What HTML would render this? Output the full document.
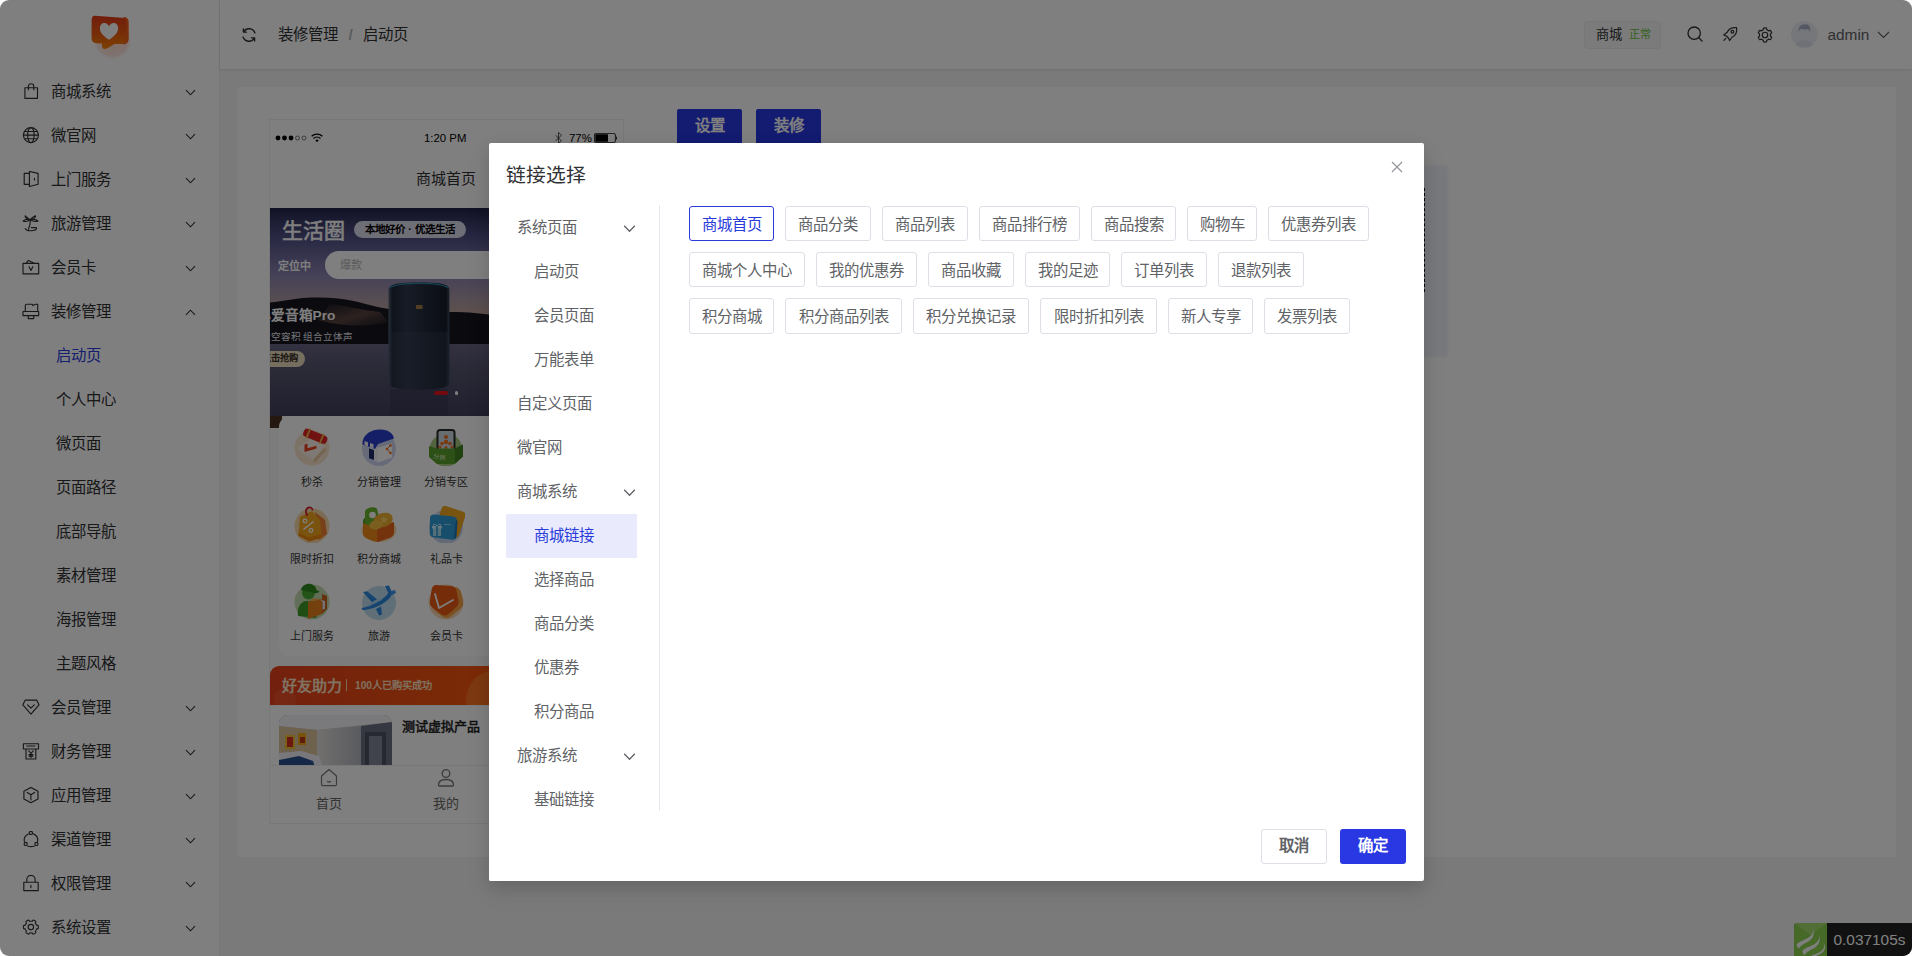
<!DOCTYPE html>
<html lang="zh-CN">
<head>
<meta charset="utf-8">
<title>链接选择</title>
<style>
*{box-sizing:border-box;margin:0;padding:0}
html,body{width:1912px;height:956px;overflow:hidden;background:#fff;font-family:"Liberation Sans",sans-serif;}
#app{position:absolute;left:0;top:0;width:1912px;height:956px;border-radius:9px;overflow:hidden;background:#f5f5f5;}
.abs{position:absolute}
svg{display:block}
/* sidebar */
#side{position:absolute;left:0;top:0;width:220px;height:956px;background:#fff;border-right:1px solid #e8ecf4;}
.mi{position:absolute;left:0;width:220px;height:44px;line-height:46px;font-size:15.4px;color:#303133;}
.mi .ic{position:absolute;left:22px;top:14px;width:18px;height:18px}
.mi .tx{position:absolute;left:51px;top:0}
.mi .ch{position:absolute;left:185px;top:18px;width:11px;height:11px}
.sub{position:absolute;left:55.5px;height:44px;line-height:46px;font-size:15.4px;color:#303133;}
.sub.on{color:#2a3bdc}
/* header */
#hd{position:absolute;left:220px;top:0;width:1692px;height:69px;background:#fff;box-shadow:0 1px 3px rgba(70,90,150,.13);}
/* card */
#card{position:absolute;left:237px;top:87px;width:1659px;height:770px;background:#fff;}
/* overlay */
#ov{position:absolute;left:0;top:0;width:1912px;height:956px;background:rgba(0,0,0,.5);}
/* modal */
#md{position:absolute;left:489px;top:143px;width:935px;height:738px;background:#fff;border-radius:2px;box-shadow:0 6px 16px rgba(0,0,0,.13),0 10px 28px 2px rgba(0,0,0,.05);}
.lm{position:absolute;left:17px;width:131px;height:44px;line-height:44px;font-size:15.4px;color:#606266;}
.lm.s{padding-left:28px}
.lm.t{padding-left:11px}
.lm.on{background:#e9ebfc;color:#2a3bdc}
.lm .ch{position:absolute;left:117px;top:15.5px;width:13px;height:13px}
.tag{position:absolute;height:35px;line-height:35px;border:1px solid #dcdfe6;border-radius:3px;font-size:15.4px;color:#606266;text-align:center;background:#fff;white-space:nowrap;}
.tag.on{border-color:#2a3bdc;color:#2a3bdc}
</style>
</head>
<body>
<div id="app">
  <div id="side"><svg class="abs" style="left:80px;top:5px;width:60px;height:60px" viewBox="0 0 60 60">
<defs><linearGradient id="lg1" x1="0" y1="0" x2="0" y2="1"><stop offset="0" stop-color="#e23a1a"/><stop offset=".55" stop-color="#ee5c10"/><stop offset="1" stop-color="#fa8206"/></linearGradient><radialGradient id="lg2"><stop offset="0" stop-color="#ffd8cc"/><stop offset=".8" stop-color="#ffe4dc"/><stop offset="1" stop-color="#ffe4dc" stop-opacity="0"/></radialGradient></defs>
<circle cx="32.600" cy="35.200" r="19" fill="url(#lg2)"/>
<path d="M43.500 11.800Q48.500 12.300 48.700 17V33.500Q48.500 39 43.500 39.500z" fill="#f2601a"/>
<path d="M15 10.700L42 12.800Q46.600 13.300 46.600 18V34Q46.600 38.800 42 39L34.500 39L27 43.600Q22 45.200 22 40.500V38.600L16 38.200Q11.600 37.700 11.600 33V15.500Q11.600 10.400 15 10.700z" fill="url(#lg1)"/>
<path d="M29 34.800C22 30 20 27 20 23.700A4.600 4.600 0 0 1 29 21.500A4.600 4.600 0 0 1 38 23.700C38 27 36 30 29 34.800z" fill="#fff"/>
</svg>
<div class="mi" style="top:69px"><svg class="ic" viewBox="0 0 18 18" fill="none" stroke="#303133" stroke-width="1.15" stroke-linejoin="round" stroke-linecap="round"><path d="M2.900 4.700H15.500V15.300H2.900z M6.400 6.800V3.400A2.700 2.700 0 0 1 11.800 3.400V6.800" /></svg><span class="tx">商城系统</span><svg class="ch" viewBox="0 0 11 11"><path d="M1 3.2 L5.5 7.8 L10 3.2" fill="none" stroke="#303133" stroke-width="1.1"/></svg></div>
<div class="mi" style="top:113px"><svg class="ic" viewBox="0 0 18 18" fill="none" stroke="#303133" stroke-width="1.15" stroke-linejoin="round" stroke-linecap="round"><circle cx="8.900" cy="8.100" r="7.500"/><ellipse cx="8.900" cy="8.100" rx="3.300" ry="7.500"/><path d="M1.400 8.100h15M2.600 4.500h12.600M2.600 11.700h12.600"/></svg><span class="tx">微官网</span><svg class="ch" viewBox="0 0 11 11"><path d="M1 3.2 L5.5 7.8 L10 3.2" fill="none" stroke="#303133" stroke-width="1.1"/></svg></div>
<div class="mi" style="top:157px"><svg class="ic" viewBox="0 0 18 18" fill="none" stroke="#303133" stroke-width="1.15" stroke-linejoin="round" stroke-linecap="round"><path d="M7.100 2.400H2.200V13.300H7.100 M7.400 0.400L16.100 2.400V13.300L7.400 15.500z M12.500 7.300v1.600"/></svg><span class="tx">上门服务</span><svg class="ch" viewBox="0 0 11 11"><path d="M1 3.2 L5.5 7.8 L10 3.2" fill="none" stroke="#303133" stroke-width="1.1"/></svg></div>
<div class="mi" style="top:201px"><svg class="ic" viewBox="0 0 18 18" fill="none" stroke="#303133" stroke-width="1.15" stroke-linejoin="round" stroke-linecap="round"><path d="M8.200 4.700C8.700 8 7.700 11 6.400 14.300 M3.300 13.600C3.300 16.600 14.600 16.600 14.600 13 M9.300 12.600H14.200 M8.200 4.700C6.500 4 4 1.500 3.200 0.800C2.800 2.500 5.500 4.500 8.200 4.700z M8.200 4.700C9.500 3.500 12 1 13.500 0.900C13.800 2.600 11 4.500 8.200 4.700z M8.200 4.700C6 4.200 2.500 4.500 1.200 6C3 7.200 6.500 6 8.200 4.700z M8.200 4.700C10.500 4.200 14.500 4.500 16 6C14 7.200 10 6 8.200 4.700z"/></svg><span class="tx">旅游管理</span><svg class="ch" viewBox="0 0 11 11"><path d="M1 3.2 L5.5 7.8 L10 3.2" fill="none" stroke="#303133" stroke-width="1.1"/></svg></div>
<div class="mi" style="top:245px"><svg class="ic" viewBox="0 0 18 18" fill="none" stroke="#303133" stroke-width="1.15" stroke-linejoin="round" stroke-linecap="round"><path d="M1 4.300H16.700V14.800H1z M4 4.300L6.300 1.400L12.300 4.300 M7.100 7.700L8.900 11.400L10.800 7.700"/></svg><span class="tx">会员卡</span><svg class="ch" viewBox="0 0 11 11"><path d="M1 3.2 L5.5 7.8 L10 3.2" fill="none" stroke="#303133" stroke-width="1.1"/></svg></div>
<div class="mi" style="top:289px"><svg class="ic" viewBox="0 0 18 18" fill="none" stroke="#303133" stroke-width="1.15" stroke-linejoin="round" stroke-linecap="round"><path d="M3.300 8.500V2.500Q3.300 1.200 4.600 1.200H10L11 2.600L13.500 1.200H15.700V8.500 M1 8.500H16.700V12.600H1z M6.300 12.600V15.600H11.700V12.600"/></svg><span class="tx">装修管理</span><svg class="ch" viewBox="0 0 11 11"><path d="M1 7.8 L5.5 3.2 L10 7.8" fill="none" stroke="#303133" stroke-width="1.1"/></svg></div>
<div class="sub on" style="top:333px">启动页</div>
<div class="sub" style="top:377px">个人中心</div>
<div class="sub" style="top:421px">微页面</div>
<div class="sub" style="top:465px">页面路径</div>
<div class="sub" style="top:509px">底部导航</div>
<div class="sub" style="top:553px">素材管理</div>
<div class="sub" style="top:597px">海报管理</div>
<div class="sub" style="top:641px">主题风格</div>
<div class="mi" style="top:685px"><svg class="ic" viewBox="0 0 18 18" fill="none" stroke="#303133" stroke-width="1.15" stroke-linejoin="round" stroke-linecap="round"><path d="M3.300 1.100H14.600L17 5.800L8.900 15.200L0.900 5.800z M5.600 5.800L8.900 9.200L12.300 5.800"/></svg><span class="tx">会员管理</span><svg class="ch" viewBox="0 0 11 11"><path d="M1 3.2 L5.5 7.8 L10 3.2" fill="none" stroke="#303133" stroke-width="1.1"/></svg></div>
<div class="mi" style="top:729px"><svg class="ic" viewBox="0 0 18 18" fill="none" stroke="#303133" stroke-width="1.15" stroke-linejoin="round" stroke-linecap="round"><path d="M1.400 0.700H16.500V6H1.400z M4.800 3H13 M4 6V16H13.800V6 M6.800 7.800L9 10.300L11.200 7.800 M9 10.300V14.500 M7 11.600H11 M7 13.100H11"/></svg><span class="tx">财务管理</span><svg class="ch" viewBox="0 0 11 11"><path d="M1 3.2 L5.5 7.8 L10 3.2" fill="none" stroke="#303133" stroke-width="1.1"/></svg></div>
<div class="mi" style="top:773px"><svg class="ic" viewBox="0 0 18 18" fill="none" stroke="#303133" stroke-width="1.15" stroke-linejoin="round" stroke-linecap="round"><path d="M8.900 0.400L16 4.300V12L8.900 15.700L1.900 12V4.300z M5.200 5.400L8.900 7.700L12.600 5.400 M8.900 7.700V13"/></svg><span class="tx">应用管理</span><svg class="ch" viewBox="0 0 11 11"><path d="M1 3.2 L5.5 7.8 L10 3.2" fill="none" stroke="#303133" stroke-width="1.1"/></svg></div>
<div class="mi" style="top:817px"><svg class="ic" viewBox="0 0 18 18" fill="none" stroke="#303133" stroke-width="1.15" stroke-linejoin="round" stroke-linecap="round"><circle cx="8.900" cy="1.900" r="1.600"/><circle cx="3.700" cy="12.900" r="1.600"/><circle cx="14.400" cy="12.900" r="1.600"/><path d="M6.300 2.900A7 7 0 0 0 2.300 10.500 M11.500 2.900A7 7 0 0 1 15.600 10.500 M5.900 15.200Q8.900 16.100 12.200 15.200"/></svg><span class="tx">渠道管理</span><svg class="ch" viewBox="0 0 11 11"><path d="M1 3.2 L5.5 7.8 L10 3.2" fill="none" stroke="#303133" stroke-width="1.1"/></svg></div>
<div class="mi" style="top:861px"><svg class="ic" viewBox="0 0 18 18" fill="none" stroke="#303133" stroke-width="1.15" stroke-linejoin="round" stroke-linecap="round"><path d="M1.800 7.200H16.200V15.600H1.800z M4.800 7.200V4.500A4.100 4.100 0 0 1 13.100 4.500V7.200 M8.900 10.200v2.500"/></svg><span class="tx">权限管理</span><svg class="ch" viewBox="0 0 11 11"><path d="M1 3.2 L5.5 7.8 L10 3.2" fill="none" stroke="#303133" stroke-width="1.1"/></svg></div>
<div class="mi" style="top:905px"><svg class="ic" viewBox="0 0 18 18" fill="none" stroke="#303133" stroke-width="1.15" stroke-linejoin="round" stroke-linecap="round"><circle cx="8.900" cy="8.100" r="2.700"/><path d="M16.35 8.10 L16.34 8.49 L16.31 8.88 L16.26 9.27 L16.13 9.64 L15.35 9.83 L14.57 9.94 L14.41 10.21 L14.29 10.50 L14.16 10.78 L14.01 11.05 L13.85 11.31 L13.67 11.57 L13.49 11.81 L13.33 12.09 L13.62 12.82 L13.85 13.59 L13.59 13.89 L13.28 14.13 L12.96 14.35 L12.63 14.55 L12.28 14.74 L11.93 14.91 L11.57 15.06 L11.18 15.13 L10.63 14.55 L10.14 13.93 L9.82 13.93 L9.52 13.97 L9.21 13.99 L8.90 14.00 L8.59 13.99 L8.28 13.97 L7.98 13.93 L7.66 13.93 L7.17 14.55 L6.62 15.13 L6.23 15.06 L5.87 14.91 L5.52 14.74 L5.18 14.55 L4.84 14.35 L4.52 14.13 L4.21 13.89 L3.95 13.59 L4.18 12.82 L4.47 12.09 L4.31 11.81 L4.13 11.57 L3.95 11.31 L3.79 11.05 L3.64 10.78 L3.51 10.50 L3.39 10.21 L3.23 9.94 L2.45 9.83 L1.67 9.64 L1.54 9.27 L1.49 8.88 L1.46 8.49 L1.45 8.10 L1.46 7.71 L1.49 7.32 L1.54 6.93 L1.67 6.56 L2.45 6.37 L3.23 6.26 L3.39 5.99 L3.51 5.70 L3.64 5.42 L3.79 5.15 L3.95 4.89 L4.13 4.63 L4.31 4.39 L4.47 4.11 L4.18 3.38 L3.95 2.61 L4.21 2.31 L4.52 2.07 L4.84 1.85 L5.17 1.65 L5.52 1.46 L5.87 1.29 L6.23 1.14 L6.62 1.07 L7.17 1.65 L7.66 2.27 L7.98 2.27 L8.28 2.23 L8.59 2.21 L8.90 2.20 L9.21 2.21 L9.52 2.23 L9.82 2.27 L10.14 2.27 L10.63 1.65 L11.18 1.07 L11.57 1.14 L11.93 1.29 L12.28 1.46 L12.63 1.65 L12.96 1.85 L13.28 2.07 L13.59 2.31 L13.85 2.61 L13.62 3.38 L13.33 4.11 L13.49 4.39 L13.67 4.63 L13.85 4.89 L14.01 5.15 L14.16 5.42 L14.29 5.70 L14.41 5.99 L14.57 6.26 L15.35 6.37 L16.13 6.56 L16.26 6.93 L16.31 7.32 L16.34 7.71Z"/></svg><span class="tx">系统设置</span><svg class="ch" viewBox="0 0 11 11"><path d="M1 3.2 L5.5 7.8 L10 3.2" fill="none" stroke="#303133" stroke-width="1.1"/></svg></div></div>
  <div id="hd"><svg class="abs" style="left:19.8px;top:25.8px;width:18px;height:18px" viewBox="0 0 16 16" fill="none" stroke="#303133" stroke-width="1.2" stroke-linecap="round" stroke-linejoin="round"><path d="M13.300 6.200A5.600 5.600 0 0 0 3.200 5.200 M2.700 9.800a5.600 5.600 0 0 0 10.100 1 M3 2.600v2.800h2.800 M13 13.400v-2.800h-2.800"/></svg>
<div class="abs" style="left:57.5px;top:0;height:69px;line-height:69px;font-size:15.400px;color:#303133;white-space:nowrap">装修管理<span style="color:#b4b8c0;font-weight:bold;margin:0 10px 0 11px">/</span><span>启动页</span></div>
<div class="abs" style="left:1364px;top:21px;width:77px;height:28px;border:1px solid #ececee;background:#f7f7f8;border-radius:4px;"></div>
<div class="abs" style="left:1376px;top:21px;height:28px;line-height:27px;font-size:13.200px;color:#303133;white-space:nowrap">商城</div>
<div class="abs" style="left:1409px;top:21px;height:28px;line-height:27px;font-size:11px;color:#67c23a;white-space:nowrap">正常</div>
<svg class="abs" style="left:1466px;top:25px;width:18px;height:18px" viewBox="0 0 18 18" fill="none" stroke="#303133" stroke-width="1.300" stroke-linecap="round"><circle cx="8.200" cy="8.200" r="6.200"/><path d="M12.800 12.800l3.200 3.200"/></svg>
<svg class="abs" style="left:1501px;top:25px;width:18px;height:18px" viewBox="0 0 18 18" fill="none" stroke="#303133" stroke-width="1.200" stroke-linecap="round" stroke-linejoin="round"><path d="M15.600 2.600C11 2.200 7.600 4 6.200 7.200L2.700 9.900L5.300 11L7.400 13L8.600 15.500L11.200 12C14.400 10.600 16.200 7.200 15.600 2.600z"/><circle cx="11.400" cy="6.800" r="1.400"/><path d="M4.800 13.400L2.800 15.400"/></svg>
<svg class="abs" style="left:1535.7px;top:25.9px;width:18px;height:18px" viewBox="0 0 18 18" fill="none" stroke="#303133" stroke-width="1.200" stroke-linejoin="round"><circle cx="9" cy="9" r="2.750"/><path d="M14.50 9.00 L14.49 9.29 L14.47 9.57 L14.43 9.86 L14.44 10.16 L15.06 10.62 L15.65 11.16 L15.58 11.53 L15.44 11.87 L15.28 12.20 L15.11 12.53 L14.91 12.84 L14.70 13.14 L14.48 13.44 L14.20 13.68 L13.44 13.44 L12.72 13.13 L12.46 13.27 L12.23 13.45 L12.00 13.61 L11.75 13.76 L11.50 13.90 L11.24 14.02 L10.97 14.13 L10.72 14.28 L10.62 15.06 L10.45 15.84 L10.10 15.96 L9.74 16.01 L9.37 16.04 L9.00 16.05 L8.63 16.04 L8.26 16.01 L7.90 15.96 L7.55 15.84 L7.38 15.06 L7.28 14.28 L7.03 14.13 L6.76 14.02 L6.50 13.90 L6.25 13.76 L6.00 13.61 L5.77 13.45 L5.54 13.27 L5.28 13.13 L4.56 13.44 L3.80 13.68 L3.52 13.44 L3.30 13.14 L3.09 12.84 L2.89 12.53 L2.72 12.20 L2.56 11.87 L2.42 11.53 L2.35 11.16 L2.94 10.62 L3.56 10.16 L3.57 9.86 L3.53 9.57 L3.51 9.29 L3.50 9.00 L3.51 8.71 L3.53 8.43 L3.57 8.14 L3.56 7.84 L2.94 7.38 L2.35 6.84 L2.42 6.47 L2.56 6.13 L2.72 5.80 L2.89 5.48 L3.09 5.16 L3.30 4.86 L3.52 4.56 L3.80 4.32 L4.56 4.56 L5.28 4.87 L5.54 4.73 L5.77 4.55 L6.00 4.39 L6.25 4.24 L6.50 4.10 L6.76 3.98 L7.03 3.87 L7.28 3.72 L7.38 2.94 L7.55 2.16 L7.90 2.04 L8.26 1.99 L8.63 1.96 L9.00 1.95 L9.37 1.96 L9.74 1.99 L10.10 2.04 L10.45 2.16 L10.62 2.94 L10.72 3.72 L10.97 3.87 L11.24 3.98 L11.50 4.10 L11.75 4.24 L12.00 4.39 L12.23 4.55 L12.46 4.73 L12.72 4.87 L13.44 4.56 L14.20 4.32 L14.48 4.56 L14.70 4.86 L14.91 5.16 L15.11 5.48 L15.28 5.80 L15.44 6.13 L15.58 6.47 L15.65 6.84 L15.06 7.38 L14.44 7.84 L14.43 8.14 L14.47 8.43 L14.49 8.71Z"/></svg>
<svg class="abs" style="left:1571px;top:21.300px;width:26.600px;height:26.600px" viewBox="0 0 26.600 26.600"><defs><clipPath id="avc"><circle cx="13.300" cy="13.300" r="13.300"/></clipPath></defs><circle cx="13.300" cy="13.300" r="13.300" fill="#eceef6"/><g clip-path="url(#avc)"><path d="M3.500 27c.5-5 4-7.500 9.800-7.500s9.300 2.500 9.800 7.500z" fill="#e0e3ee"/><ellipse cx="13.300" cy="12.500" rx="4.800" ry="6" fill="#eceef6"/><path d="M7.800 11.500C6.800 6 9.500 3.600 13.300 3.600c1.500 0 2.200-.6 3-.2 3 1.400 3.400 4.600 2.600 8.100-.4-2-1-3-2.400-3.400-2 .8-4.800.6-6.300-.3-1.400.5-2 1.800-2.400 3.700z" fill="#a9aec6"/></g></svg>
<div class="abs" style="left:1607.5px;top:0;height:69px;line-height:69px;font-size:15.400px;color:#606266;">admin</div>
<svg class="abs" style="left:1657px;top:29px;width:13px;height:11px" viewBox="0 0 13 11"><path d="M1 3l5.500 5.500L12 3" fill="none" stroke="#606266" stroke-width="1.100"/></svg></div>
  <div id="card"><div class="abs" style="left:440px;top:22px;width:65px;height:36px;background:#2938e2;border-radius:2px;color:#fff;font-size:15.400px;font-weight:bold;text-align:center;line-height:34px">设置</div>
<div class="abs" style="left:519px;top:22px;width:65px;height:36px;background:#2938e2;border-radius:2px;color:#fff;font-size:15.400px;font-weight:bold;text-align:center;line-height:34px">装修</div>
<div class="abs" style="left:863px;top:79px;width:347px;height:190px;background:#f1f3f8;box-shadow:0 0 4px rgba(0,0,0,.08)"></div>
<div class="abs" style="left:863px;top:101px;width:325px;height:104px;border:1px dashed #000"></div>
<div class="abs" style="left:32px;top:32px;width:355px;height:705px;background:#f8f8f8;border:1px solid #f1f1f1;overflow:hidden"></div>
<div class="abs" style="left:33px;top:33px;width:353px;height:703px;overflow:hidden"><div class="abs" style="left:-33px;top:-33px"><div class="abs" style="left:33px;top:33px;width:353px;height:88px;background:#fff"></div>
<svg class="abs" style="left:37.5px;top:47px;width:34px;height:8px;"><circle cx="3" cy="4" r="2.400" fill="#000"/><circle cx="9.5" cy="4" r="2.400" fill="#000"/><circle cx="16" cy="4" r="2.400" fill="#000"/><circle cx="22.5" cy="4" r="2" fill="none" stroke="#000" stroke-width=".5"/><circle cx="29" cy="4" r="2" fill="none" stroke="#000" stroke-width=".5"/></svg>
<div class="abs" style="left:74px;top:45.5px;width:12px;height:10px;"><svg viewBox="0 0 12 10" width="12" height="10"><path d="M.6 3.300a8 8 0 0 1 10.800 0" fill="none" stroke="#000" stroke-width="1.300"/><path d="M2.500 5.400a5.200 5.200 0 0 1 7 0" fill="none" stroke="#000" stroke-width="1.300"/><path d="M4.300 7.300a2.600 2.600 0 0 1 3.400 0L6 9.200z" fill="#000"/></svg></div>
<div class="abs" style="left:187px;top:43.5px;height:14px;line-height:14px;font-size:11.4px;color:#000;white-space:nowrap;">1:20 PM</div>
<div class="abs" style="left:318px;top:45px;width:7px;height:12px;"><svg viewBox="0 0 7 12" width="7" height="12" fill="none" stroke="#333" stroke-width=".8"><path d="M.5 3.300l6 5.400L3.500 11.500V.5l3 2.800-6 5.400"/></svg></div>
<div class="abs" style="left:332px;top:43.5px;height:14px;line-height:14px;font-size:11.4px;color:#000;white-space:nowrap;">77%</div>
<div class="abs" style="left:356.5px;top:46px;width:24px;height:10px;"><svg viewBox="0 0 24 10" width="24" height="10"><rect x=".4" y=".4" width="21" height="9.200" rx="1.600" fill="none" stroke="#000" stroke-width=".8"/><rect x="1.300" y="1.300" width="12.700" height="7.400" rx=".6" fill="#000"/><path d="M22 3.200c1.200.3 1.200 3.300 0 3.600z" fill="#000"/></svg></div>
<div class="abs" style="left:179px;top:80px;height:24px;line-height:24px;font-size:15px;color:#303133;white-space:nowrap;">商城首页</div>
<div class="abs" style="left:33px;top:329px;width:12px;height:12px;background:#4a3020"></div>
<div class="abs" style="left:33px;top:121px;width:353px;height:208px;"><svg viewBox="0 0 353 208" width="353" height="208"><defs><linearGradient id="sky" x1="0" y1="0" x2="0" y2="1"><stop offset="0" stop-color="#24244a"/><stop offset=".25" stop-color="#4e4e84"/><stop offset=".62" stop-color="#8c84b0"/><stop offset=".85" stop-color="#b09ca4"/><stop offset="1" stop-color="#c2a498"/></linearGradient><linearGradient id="wat" x1="0" y1="0" x2="0" y2="1"><stop offset="0" stop-color="#6e6a8c"/><stop offset=".4" stop-color="#56546e"/><stop offset="1" stop-color="#40405e"/></linearGradient><linearGradient id="sp" x1="0" x2="1"><stop offset="0" stop-color="#566478"/><stop offset=".06" stop-color="#1e2636"/><stop offset=".3" stop-color="#2e384c"/><stop offset=".6" stop-color="#222a3c"/><stop offset=".94" stop-color="#161c2a"/><stop offset="1" stop-color="#3c4a60"/></linearGradient><linearGradient id="dune" x1="0" y1="0" x2="1" y2="1"><stop offset="0" stop-color="#181822"/><stop offset=".55" stop-color="#6a5048"/><stop offset="1" stop-color="#1a1820"/></linearGradient></defs><rect width="353" height="110" fill="url(#sky)"/><rect y="128" width="353" height="80" fill="url(#wat)"/><path d="M0 94.500C14 93 26 90 42 89.500s30 .5 44 4 22 6 34 7.500 40 3 60 3 30 1.500 44 3 40-6 60-5 50 6 69 4V136H0z" fill="#14141e"/><path d="M60 96c14 1 30 6 50 8l8 10c-20 6-50 4-70-2z" fill="url(#dune)" opacity=".8"/><rect x="120" y="181" width="58" height="27" fill="#34344e" opacity=".45"/><path d="M118.500 82C118.500 76 128 74.500 149 74.500s30.500 1.500 30.500 7.500v93c0 4.500-10 6.500-30.500 6.500s-30.500-2-30.500-6.500z" fill="url(#sp)"/><path d="M118.500 124h61v51c0 4.500-10 6.500-30.500 6.500s-30.500-2-30.500-6.500z" fill="#3a4458" opacity=".35"/><path d="M120 79.500C126 76 138 75.300 149 75.300s23 .7 29 4.200" fill="none" stroke="#2a86a8" stroke-width="1.300"/><rect x="146" y="97" width="6.500" height="4" fill="#a07c44"/></svg></div>
<div class="abs" style="left:44.5px;top:132px;height:24px;line-height:24px;font-size:21px;color:#fff;white-space:nowrap;-webkit-text-stroke:.55px #fff">生活圈</div>
<div class="abs" style="left:117px;top:134px;width:112px;height:17px;background:#dcdcec;border-radius:9px;color:#000;font-size:10.500px;font-weight:bold;text-align:center;line-height:17px;white-space:nowrap">本地好价 · 优选生活</div>
<div class="abs" style="left:41px;top:171px;height:16px;line-height:16px;font-size:11px;color:#fff;white-space:nowrap;font-weight:bold">定位中</div>
<div class="abs" style="left:88px;top:164px;width:300px;height:28px;background:#fff;border-radius:14px;"></div>
<div class="abs" style="left:103px;top:170px;height:16px;line-height:16px;font-size:11px;color:#b4b4b4;white-space:nowrap;">爆款</div>
<div class="abs" style="left:19.5px;top:217.5px;height:22px;line-height:22px;font-size:13.7px;color:#fff;white-space:nowrap;font-weight:bold">小爱音箱Pro</div>
<div class="abs" style="left:23.5px;top:242.5px;height:14px;line-height:14px;font-size:9.6px;color:#e8e8ee;white-space:nowrap;">大空容积 组合立体声</div>
<div class="abs" style="left:19px;top:264px;width:48.5px;height:15.5px;background:#ecdcbe;border-radius:8px;color:#3a3228;font-size:9.300px;font-weight:bold;line-height:15.500px;text-align:right;padding-right:7px;white-space:nowrap">点击抢购</div>
<div class="abs" style="left:196.7px;top:304px;width:14.5px;height:4px;background:#e8141a;border-radius:2px"></div>
<div class="abs" style="left:217.6px;top:304.2px;width:3.4px;height:3.6px;background:#fff;border-radius:2px"></div>
<div class="abs" style="left:42px;top:329px;width:334px;height:240px;background:#fff;border-radius:11px"></div>
<div class="abs" style="left:56.3px;top:340.8px;width:38px;height:38px;"><svg viewBox="0 0 38 38" width="38" height="38"><circle cx="19" cy="20" r="17.500" fill="#fae4cc"/><path d="M4 20l14-9 15 8-13 14z" fill="#fdf3ea"/><path d="M20 32l12-13 1.500 3-12 13z" fill="#e9c9a0"/><g transform="rotate(22 22 9)"><rect x="9.500" y="4" width="25" height="8.500" rx="3.500" fill="#e02424"/><rect x="13.500" y="3" width="1.800" height="10.500" fill="#f2b84a"/><rect x="28" y="3" width="1.800" height="10.500" fill="#f2b84a"/></g><path d="M11.500 16.500v7.500l12-3.500v-2.800l-9 2.600v-4.600z" fill="#e8401a"/></svg></div>
<div class="abs" style="left:42.3px;top:386.8px;width:66px;height:16px;text-align:center;font-size:11px;line-height:16px;color:#333;white-space:nowrap">秒杀</div>
<div class="abs" style="left:123.15px;top:340.8px;width:38px;height:38px;"><svg viewBox="0 0 38 38" width="38" height="38"><circle cx="19" cy="21" r="17" fill="#cfd6f2"/><path d="M9 16l9 3.500v15L9 30z" fill="#f4f4fa"/><path d="M18 19.500l14-4v14L18 34.500z" fill="#fff"/><path d="M2.500 14C4 4 16 -1 27 2.500c4 1.500 6.500 4.500 7 8L18 16l-3 5-12.500-4.500z" fill="#2a3fd0"/><path d="M4.500 13l3.500 1.300v4.200l-3.500-1.300z M10 15l3.500 1.300v4.200l-3.500-1.300z" fill="#f2f2fa"/><rect x="9" y="21" width="5" height="10" fill="#1c2a6a" transform="skewY(20) translate(0 -4)"/><circle cx="27" cy="21" r="1.300" fill="#f07020"/><circle cx="30.500" cy="17.500" r="1.300" fill="#f07020"/><circle cx="30.500" cy="25" r="1.300" fill="#f07020"/><path d="M27 21l3.500-3.500M27 21l3.500 4" stroke="#f07020" stroke-width="1"/></svg></div>
<div class="abs" style="left:109.15px;top:386.8px;width:66px;height:16px;text-align:center;font-size:11px;line-height:16px;color:#333;white-space:nowrap">分销管理</div>
<div class="abs" style="left:190px;top:340.8px;width:38px;height:38px;"><svg viewBox="0 0 38 38" width="38" height="38"><circle cx="19" cy="22" r="16.500" fill="#a8c880"/><rect x="9.500" y="1" width="19" height="28" rx="3.500" fill="#2a2a2a"/><rect x="11.500" y="3" width="15" height="24" rx="1.500" fill="#cfdce4"/><circle cx="19" cy="9" r="2" fill="#f07020"/><circle cx="15" cy="15.500" r="1.800" fill="#f07020"/><circle cx="23" cy="15.500" r="1.800" fill="#f07020"/><circle cx="19" cy="14" r="2.200" fill="#f07020"/><circle cx="13" cy="19" r="1.500" fill="#f07020"/><circle cx="19" cy="19.500" r="1.500" fill="#f07020"/><circle cx="25" cy="19" r="1.500" fill="#f07020"/><path d="M2 18l8 2.500h18l8-4v12l-9 7.500H10L2 29z" fill="#5aa02c"/><path d="M28 20.500l8-4v12l-8 7z" fill="#3e8420"/><text x="6" y="30" font-size="6" fill="#d8ecc0" font-family="Liberation Sans,sans-serif" transform="rotate(12 6 30)">分销</text></svg></div>
<div class="abs" style="left:176px;top:386.8px;width:66px;height:16px;text-align:center;font-size:11px;line-height:16px;color:#333;white-space:nowrap">分销专区</div>
<div class="abs" style="left:56.3px;top:418px;width:38px;height:38px;"><svg viewBox="0 0 38 38" width="38" height="38"><circle cx="19" cy="21" r="17.500" fill="#f8d8a8"/><path d="M22 7l10 8 2 14-8 6z" fill="#f08030"/><path d="M7 12l12-6 8 9 1.500 16L16 36 5.500 30z" fill="#f5a81c"/><path d="M5.500 28L16 32.500l12-3.500.500 4L16 36.500 5.500 31z" fill="#ee8a10"/><path d="M14 10c-2-4-1-7 2-7.500 2-.3 3 .7 3.500 2" fill="none" stroke="#d81e2a" stroke-width="1.800" stroke-linecap="round"/><circle cx="12" cy="16" r="1.800" fill="none" stroke="#fff" stroke-width="1.300"/><circle cx="18" cy="25.500" r="1.800" fill="none" stroke="#fff" stroke-width="1.300"/><path d="M10.500 24.500l10-8" stroke="#fff" stroke-width="1.600"/></svg></div>
<div class="abs" style="left:42.3px;top:464px;width:66px;height:16px;text-align:center;font-size:11px;line-height:16px;color:#333;white-space:nowrap">限时折扣</div>
<div class="abs" style="left:123.15px;top:418px;width:38px;height:38px;"><svg viewBox="0 0 38 38" width="38" height="38"><ellipse cx="19" cy="25" rx="17.500" ry="12" fill="#f6d8a8"/><path d="M3 17c0-4 3-6 6-5l3 11-8 1z" fill="#4a9a20"/><path d="M5 6c2-4 10-5 12-2l2 8-8 11-6-4z" fill="#6ab42a"/><circle cx="12.500" cy="10" r="3.300" fill="#fff"/><path d="M3 18l14 6 17-7v10c0 3-2 5-5 6l-10 3.500c-2 .6-4 .3-6-.5l-7-3c-2-1-3-3-3-5z" fill="#f08a18"/><path d="M17 24l17-7v10c0 3-2 5-5 6l-10 3.500c-1 .3-2 .3-2 0z" fill="#e8641a"/><ellipse cx="23" cy="15" rx="10" ry="7" fill="#f0b030" transform="rotate(-18 23 15)"/><ellipse cx="16" cy="20" rx="7" ry="4.500" fill="#f4be40" transform="rotate(-10 16 20)"/><path d="M24 10.500l1.200 2.500 2.800.3-2 2 .5 2.800-2.500-1.400-2.500 1.400.5-2.800-2-2 2.800-.3z" fill="#f8d060"/></svg></div>
<div class="abs" style="left:109.15px;top:464px;width:66px;height:16px;text-align:center;font-size:11px;line-height:16px;color:#333;white-space:nowrap">积分商城</div>
<div class="abs" style="left:190px;top:418px;width:38px;height:38px;"><svg viewBox="0 0 38 38" width="38" height="38"><circle cx="19" cy="22" r="17" fill="#c4d4f0"/><rect x="11" y="3" width="25" height="27" rx="4" fill="#f0a820" transform="rotate(18 23 16)"/><path d="M3 13c0-2 1.500-3.500 3.500-3.500l20 2c2 .2 3.500 2 3.500 4l-1 16c-.2 2-2 3.500-4 3.300l-19-2.500c-2-.3-3.300-2-3.200-4z" fill="#2c9cd8"/><path d="M27 30l2-15c1 0 1.500 1 1.500 2l-1 14c-.2 2-1 3-2.500 3.500z" fill="#1c78b8"/><rect x="6" y="23" width="8" height="8" fill="#a8dcf4"/><rect x="5" y="21" width="10" height="2.500" fill="#c8ecfc"/><rect x="9.200" y="21" width="1.600" height="10" fill="#2c9cd8"/><path d="M10 21c-2-3-5-2-3 0M10 21c2-3 5-2 3 0" stroke="#c8ecfc" stroke-width="1" fill="none"/><path d="M17 19.500h7" stroke="#a8dcf4" stroke-width=".8"/></svg></div>
<div class="abs" style="left:176px;top:464px;width:66px;height:16px;text-align:center;font-size:11px;line-height:16px;color:#333;white-space:nowrap">礼品卡</div>
<div class="abs" style="left:56.3px;top:495.2px;width:38px;height:38px;"><svg viewBox="0 0 38 38" width="38" height="38"><circle cx="19" cy="20" r="17.500" fill="#c4dcb0"/><path d="M5 34c-1-8 2-14 8-15h6c4 1 6 5 6 10l-2 7z" fill="#3e9a28"/><circle cx="15.500" cy="11" r="6.500" fill="#48a830"/><path d="M8 8c1-5 6-7 10-6 3 1 5 3 5.500 6l3 1.500c-1 1.500-3 2-5 1.500z" fill="#2e8a1c"/><path d="M15 20l14-3v15l-14 5z" fill="#e8801c"/><path d="M29 17l5 2v13l-5 5z" fill="#c8601a" transform="translate(0 -5)"/><path d="M15 20l5-3.500 14 .5-5 0z" fill="#f4a848"/><path d="M27 17.500l5 1.500v8l-2.500.8v-8z" fill="#e8e8ec"/></svg></div>
<div class="abs" style="left:42.3px;top:541.2px;width:66px;height:16px;text-align:center;font-size:11px;line-height:16px;color:#333;white-space:nowrap">上门服务</div>
<div class="abs" style="left:123.15px;top:495.2px;width:38px;height:38px;"><svg viewBox="0 0 38 38" width="38" height="38"><circle cx="19" cy="21" r="17" fill="#c0dcf0"/><path d="M2 26c5-1 10-3 16-6.500 5-3 8-5 10-8 1.500-2 4-2 4 0-.5 3-4 7-9 10-6 3.500-13 6-19 6.500-2 0-3-1-2-2z" fill="#2a88e0"/><path d="M3 10l4-.8 10 8-5 3z" fill="#2a88e0"/><path d="M16 27l5-2.500 1 8-3 1z" fill="#2a88e0"/><path d="M25 4l4-.500 3 7-3 2z" fill="#2a88e0"/><path d="M31 9l4-1 1 3-4 2z" fill="#3a98f0"/><path d="M8 24l14-7" stroke="#a0d0f8" stroke-width="1.500"/></svg></div>
<div class="abs" style="left:109.15px;top:541.2px;width:66px;height:16px;text-align:center;font-size:11px;line-height:16px;color:#333;white-space:nowrap">旅游</div>
<div class="abs" style="left:190px;top:495.2px;width:38px;height:38px;"><svg viewBox="0 0 38 38" width="38" height="38"><circle cx="19" cy="20" r="17.500" fill="#f8d4b0"/><path d="M12 4l16 1c3 .5 5 2 6 5l2 10c.5 3-.5 5-3 7l-10 8c-2 1.500-5 1.500-7 0L7 28c-2-2-3-4-2.500-7l2-11c.5-3 2.500-5 5.500-6z" fill="#f4a040"/><path d="M9 3l15 1c3 .2 5 2 5.500 4.500l2 10c.5 3-.5 5-2.500 7l-8 7c-2 1.500-4.500 1.500-6.500 0l-9-7c-2-1.500-3-4-2.500-6.500l1.500-11C5 5 6.500 3 9 3z" fill="#e85a10"/><path d="M8 12l4 14 14-8" fill="none" stroke="#fff" stroke-width="1.800" stroke-linecap="round" stroke-linejoin="round"/></svg></div>
<div class="abs" style="left:176px;top:541.2px;width:66px;height:16px;text-align:center;font-size:11px;line-height:16px;color:#333;white-space:nowrap">会员卡</div>
<div class="abs" style="left:33px;top:579px;width:353px;height:39px;background:linear-gradient(90deg,#e6421c 0%,#f4520e 50%,#ff640c 100%);border-radius:9px 9px 0 0;overflow:hidden"><div class="abs" style="left:196px;top:4px;width:60px;height:60px;border-radius:30px;background:rgba(255,150,60,.45)"></div><div class="abs" style="left:4px;top:22px;width:22px;height:22px;border-radius:11px;background:rgba(255,140,110,.16)"></div></div>
<div class="abs" style="left:44.5px;top:587px;height:24px;line-height:24px;font-size:14.9px;color:#ffe6c8;white-space:nowrap;font-weight:bold">好友助力</div>
<div class="abs" style="left:109px;top:592px;width:1px;height:12px;background:#ffd0a8"></div>
<div class="abs" style="left:118px;top:591px;height:16px;line-height:16px;font-size:10.2px;color:#ffe0c0;white-space:nowrap;font-weight:bold">100人已购买成功</div>
<div class="abs" style="left:33px;top:619px;width:353px;height:60px;background:#fff"></div>
<div class="abs" style="left:42px;top:628px;width:113px;height:52px;border-radius:9px 9px 0 0;overflow:hidden;background:#8c8c90"><svg viewBox="0 0 113 52" width="113" height="52"><defs><linearGradient id="rm" x1="0" x2="1"><stop offset="0" stop-color="#e4e0dc"/><stop offset="1" stop-color="#b4b6c0"/></linearGradient></defs><rect width="113" height="52" fill="#c8c8d0"/><path d="M0 0h113v7L38 15 0 11z" fill="#f4f4f8"/><path d="M0 11l38 4v37H0z" fill="#dcc49c"/><path d="M38 15l44-4v41H38z" fill="url(#rm)"/><path d="M82 11l31-4v45H82z" fill="#6a7080"/><rect x="86" y="17" width="21" height="35" fill="#4c5260"/><rect x="90" y="21" width="13" height="31" fill="#808696"/><rect x="6" y="20" width="10" height="14" fill="#f0c030"/><rect x="8" y="22" width="6" height="10" fill="#d43020"/><rect x="19" y="18" width="8" height="12" fill="#f0a818"/><rect x="21" y="22" width="5" height="6" fill="#c03818"/><path d="M0 38l22-2 18 5 4 11H0z" fill="#f0f0f8"/><path d="M0 45l20-4 14 5 2 6H0z" fill="#2c5090"/></svg></div>
<div class="abs" style="left:165px;top:629.5px;height:20px;line-height:20px;font-size:13px;color:#222;white-space:nowrap;-webkit-text-stroke:.5px #222">测试虚拟产品</div>
<div class="abs" style="left:33px;top:678px;width:353px;height:58px;background:#fff;border-top:1px solid #f0f0f0"></div>
<div class="abs" style="left:83px;top:681px;width:18px;height:19px;"><svg viewBox="0 0 18 19" width="18" height="19" fill="none" stroke="#777" stroke-width="1.200" stroke-linejoin="round" stroke-linecap="round"><path d="M1.500 8L9 1.500 16.500 8v8.500a1.200 1.200 0 0 1-1.200 1.200H2.700a1.200 1.200 0 0 1-1.200-1.200z"/><path d="M7.500 13.500c1 .6 2 .6 3 0"/></svg></div>
<div class="abs" style="left:79px;top:709px;height:16px;line-height:16px;font-size:13px;color:#666;white-space:nowrap;">首页</div>
<div class="abs" style="left:200px;top:681px;width:18px;height:19px;"><svg viewBox="0 0 18 19" width="18" height="19" fill="none" stroke="#777" stroke-width="1.300"><circle cx="9" cy="5.500" r="3.800"/><path d="M1.500 17c0-3.500 3-5.500 7.500-5.500s7.500 2 7.500 5.500c0 .6-.4 1-1 1H2.500c-.6 0-1-.4-1-1z"/></svg></div>
<div class="abs" style="left:196px;top:709px;height:16px;line-height:16px;font-size:13px;color:#666;white-space:nowrap;">我的</div></div></div></div>
  <div class="abs" style="left:1794px;top:923px;width:118px;height:33px;background:#232323;border-radius:4px 0 0 0"></div>
<div class="abs" style="left:1794px;top:923px;width:33px;height:33px;background:#8ed250;border-radius:4px 0 0 0;overflow:hidden"><svg class="abs" style="left:0;top:0;width:33px;height:33px" viewBox="0 0 33 33"><path d="M0 0h33L16.500 12z" fill="#a0dc6c"/><path d="M18.600 5.200C20.500 10 17 13.500 12 16C7 18.500 3.500 19.500 2.600 21.500C3 24 4 25 5 25.500C6.500 22 11 20.500 15 18C19.500 15 21 10 18.600 5.200z M24.700 11C26.500 15.500 24 19.500 19 22C14 24.500 9.500 25.500 8.400 28.300C8.800 30.500 9.800 31.500 10.800 32C12.500 28.500 17 27 21 24.500C25.500 21.500 27 16 24.700 11z M29.800 20.200C31 24 29 27.500 25 29.500C22 31 19 31.500 17.200 33L22 33C24 32 27 31 29 29C31.500 26.500 31.500 23 29.800 20.200z" fill="#fff"/></svg></div>
<div class="abs" style="left:1833.5px;top:922.5px;height:33px;line-height:33px;font-size:15.400px;color:#fff;white-space:nowrap">0.037105s</div>
  <div id="ov"></div>
  <div id="md"><div class="abs" style="left:17px;top:17px;height:28px;line-height:30px;font-size:19.800px;color:#303133;white-space:nowrap">链接选择</div>
<svg class="abs" style="left:902px;top:18px;width:12px;height:12px" viewBox="0 0 12 12"><path d="M1 1l10 10M11 1L1 11" fill="none" stroke="#909399" stroke-width="1.100"/></svg>
<div class="lm t" style="top:63px">系统页面<svg class="ch" viewBox="0 0 11 11"><path d="M1 3.2 L5.5 7.8 L10 3.2" fill="none" stroke="#606266" stroke-width="1.1"/></svg></div>
<div class="lm s" style="top:107px">启动页</div>
<div class="lm s" style="top:151px">会员页面</div>
<div class="lm s" style="top:195px">万能表单</div>
<div class="lm t" style="top:239px">自定义页面</div>
<div class="lm t" style="top:283px">微官网</div>
<div class="lm t" style="top:327px">商城系统<svg class="ch" viewBox="0 0 11 11"><path d="M1 3.2 L5.5 7.8 L10 3.2" fill="none" stroke="#606266" stroke-width="1.1"/></svg></div>
<div class="lm s on" style="top:371px">商城链接</div>
<div class="lm s" style="top:415px">选择商品</div>
<div class="lm s" style="top:459px">商品分类</div>
<div class="lm s" style="top:503px">优惠券</div>
<div class="lm s" style="top:547px">积分商品</div>
<div class="lm t" style="top:591px">旅游系统<svg class="ch" viewBox="0 0 11 11"><path d="M1 3.2 L5.5 7.8 L10 3.2" fill="none" stroke="#606266" stroke-width="1.1"/></svg></div>
<div class="lm s" style="top:635px">基础链接</div>
<div class="abs" style="left:0;top:668px;width:400px;height:70px;background:#fff;border-radius:0 0 0 2px"></div>
<div class="abs" style="left:170px;top:62px;width:1px;height:606px;background:#e4e7ed"></div>
<div class="tag on" style="left:200px;top:63px;width:85px">商城首页</div>
<div class="tag" style="left:296px;top:63px;width:86px">商品分类</div>
<div class="tag" style="left:393px;top:63px;width:86px">商品列表</div>
<div class="tag" style="left:490px;top:63px;width:101px">商品排行榜</div>
<div class="tag" style="left:602px;top:63px;width:85px">商品搜索</div>
<div class="tag" style="left:698px;top:63px;width:70px">购物车</div>
<div class="tag" style="left:779px;top:63px;width:101px">优惠券列表</div>
<div class="tag" style="left:200px;top:109px;width:116px">商城个人中心</div>
<div class="tag" style="left:327px;top:109px;width:101px">我的优惠券</div>
<div class="tag" style="left:439px;top:109px;width:86px">商品收藏</div>
<div class="tag" style="left:536px;top:109px;width:85px">我的足迹</div>
<div class="tag" style="left:632px;top:109px;width:86px">订单列表</div>
<div class="tag" style="left:729px;top:109px;width:86px">退款列表</div>
<div class="tag" style="left:200px;top:155px;width:85px;height:36px;line-height:36px">积分商城</div>
<div class="tag" style="left:296px;top:155px;width:117px;height:36px;line-height:36px">积分商品列表</div>
<div class="tag" style="left:424px;top:155px;width:116px;height:36px;line-height:36px">积分兑换记录</div>
<div class="tag" style="left:551px;top:155px;width:117px;height:36px;line-height:36px">限时折扣列表</div>
<div class="tag" style="left:679px;top:155px;width:85px;height:36px;line-height:36px">新人专享</div>
<div class="tag" style="left:775px;top:155px;width:86px;height:36px;line-height:36px">发票列表</div>
<div class="abs" style="left:772px;top:686px;width:66px;height:35px;line-height:31px;border:1px solid #dcdfe6;border-radius:3px;font-size:15.400px;font-weight:bold;color:#606266;text-align:center">取消</div>
<div class="abs" style="left:851px;top:686px;width:66px;height:35px;line-height:33px;border-radius:3px;font-size:15.400px;font-weight:bold;color:#fff;background:#2938e2;text-align:center">确定</div></div>
</div>
</body>
</html>
